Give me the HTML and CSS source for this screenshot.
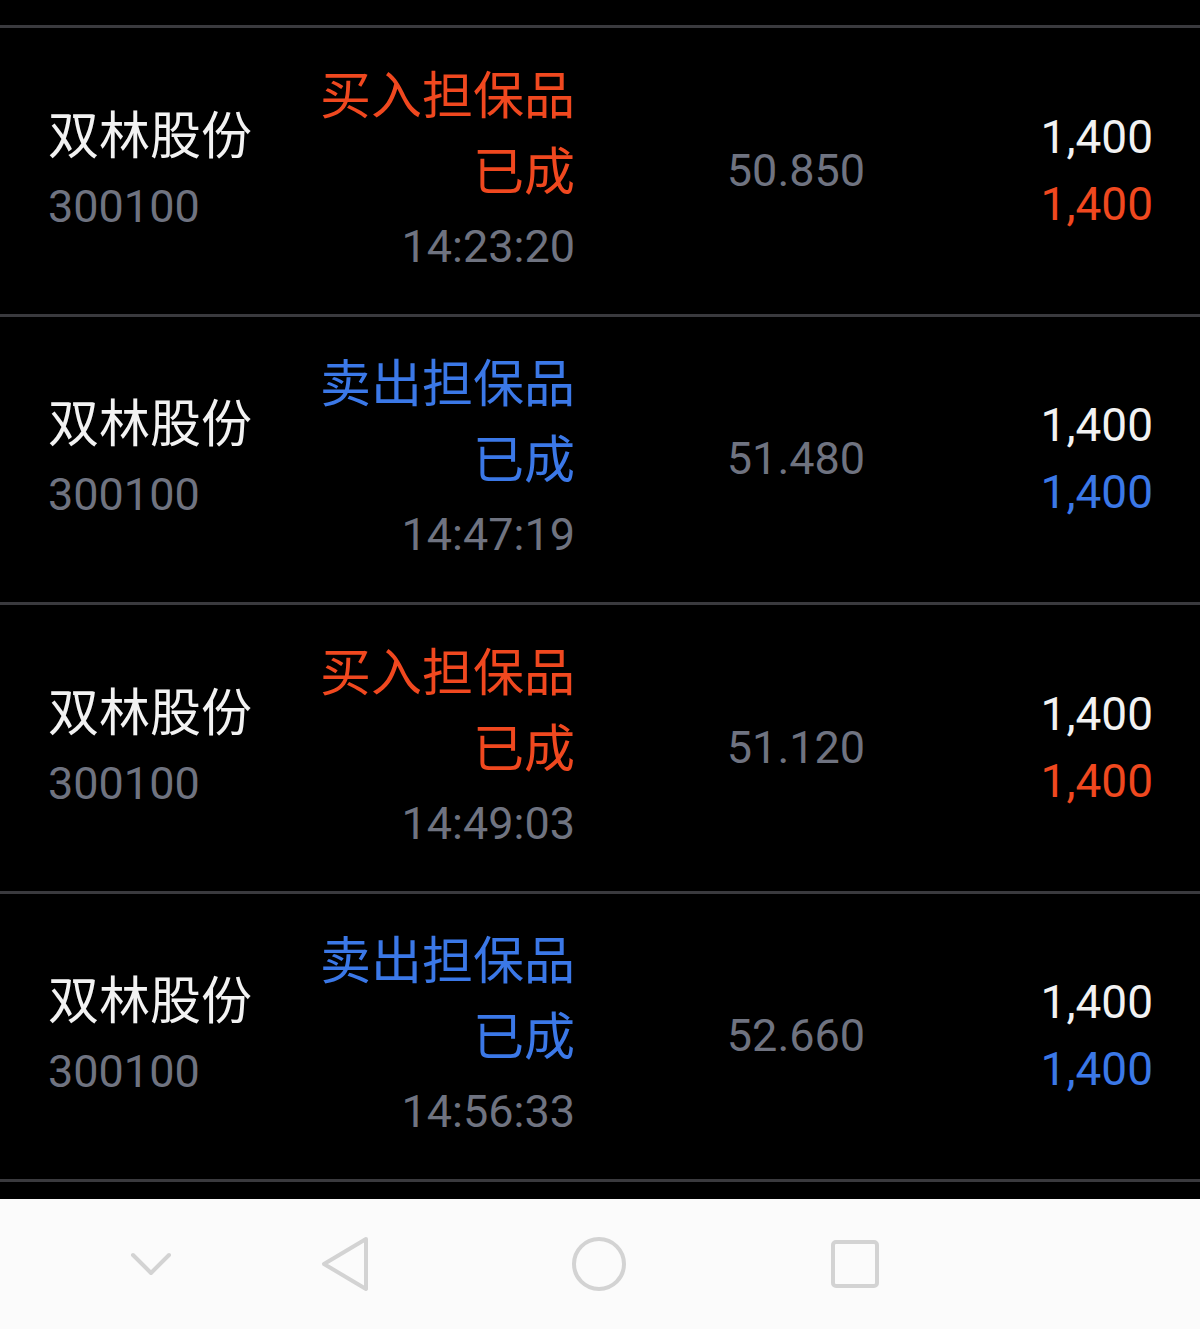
FILE: index.html
```html
<!DOCTYPE html>
<html lang="zh-CN">
<head>
<meta charset="utf-8">
<title>委托</title>
<link rel="stylesheet" href="styles.css">
</head>
<body>
<div class="screen">
  <div class="list">
    <div class="row">
      <div class="cell name-cell"><div class="name">双林股份</div><div class="code">300100</div></div>
      <div class="cell type-cell buy"><div class="type">买入担保品</div><div class="status">已成</div><div class="time">14:23:20</div></div>
      <div class="cell price-cell"><div class="price">50.850</div></div>
      <div class="cell qty-cell buy"><div class="qty">1,400</div><div class="done">1,400</div></div>
    </div>
    <div class="row">
      <div class="cell name-cell"><div class="name">双林股份</div><div class="code">300100</div></div>
      <div class="cell type-cell sell"><div class="type">卖出担保品</div><div class="status">已成</div><div class="time">14:47:19</div></div>
      <div class="cell price-cell"><div class="price">51.480</div></div>
      <div class="cell qty-cell sell"><div class="qty">1,400</div><div class="done">1,400</div></div>
    </div>
    <div class="row">
      <div class="cell name-cell"><div class="name">双林股份</div><div class="code">300100</div></div>
      <div class="cell type-cell buy"><div class="type">买入担保品</div><div class="status">已成</div><div class="time">14:49:03</div></div>
      <div class="cell price-cell"><div class="price">51.120</div></div>
      <div class="cell qty-cell buy"><div class="qty">1,400</div><div class="done">1,400</div></div>
    </div>
    <div class="row">
      <div class="cell name-cell"><div class="name">双林股份</div><div class="code">300100</div></div>
      <div class="cell type-cell sell"><div class="type">卖出担保品</div><div class="status">已成</div><div class="time">14:56:33</div></div>
      <div class="cell price-cell"><div class="price">52.660</div></div>
      <div class="cell qty-cell sell"><div class="qty">1,400</div><div class="done">1,400</div></div>
    </div>
  </div>
  <div class="peek"></div>
  <nav class="navbar">
    <svg class="nav-icon nav-hide" width="60" height="60" viewBox="0 0 60 60"><path d="M12 21 L30 39 L48 21" /></svg>
    <svg class="nav-icon nav-back" width="60" height="60" viewBox="0 0 60 60"><path d="M51 5 L9 30 L51 55 Z" /></svg>
    <svg class="nav-icon nav-home" width="60" height="60" viewBox="0 0 60 60"><circle cx="30" cy="30" r="25" /></svg>
    <svg class="nav-icon nav-recent" width="60" height="60" viewBox="0 0 60 60"><rect x="8" y="8" width="44" height="44" rx="3" /></svg>
  </nav>
</div>
</body>
</html>
```

FILE: styles.css
```css
* { box-sizing: border-box; }
html, body {
  margin: 0;
  padding: 0;
  background: #000;
}
body {
  font-family: Roboto, "Noto Sans CJK SC", sans-serif;
  width: 1200px;
  height: 1329px;
  overflow: hidden;
}
.screen {
  display: flex;
  flex-direction: column;
  height: 1329px;
}
.list {
  padding-top: 25px;
}
.row {
  height: 288.5px;
  border-top: 3px solid #3a3a3e;
  display: grid;
  grid-template-columns: 265px 262px 442px 136px;
  padding: 0 45px 0 48px;
  align-items: center;
  white-space: nowrap;
}
.cell {
  display: flex;
  flex-direction: column;
}
.name-cell { align-items: flex-start; }
.type-cell { align-items: flex-end; text-align: right; }
.price-cell { align-items: center; }
.qty-cell { align-items: flex-end; }

.name {
  font-family: "Noto Sans CJK SC", sans-serif;
  font-size: 51px;
  line-height: 72px;
  color: #f2f2f2;
}
.code {
  font-size: 45px;
  line-height: 72px;
  margin: 3px 0;
  color: #6f7380;
}
.type, .status {
  font-family: "Noto Sans CJK SC", sans-serif;
  font-size: 51px;
  line-height: 76px;
}
.time {
  font-size: 45px;
  line-height: 74px;
  margin: 4px 0;
  color: #6f7380;
}
.buy .type, .buy .status, .buy .done { color: #f0481f; }
.sell .type, .sell .status, .sell .done { color: #3b78e7; }
.price {
  font-size: 45px;
  line-height: 60px;
  color: #6f7380;
}
.qty, .done {
  font-size: 46px;
  line-height: 67px;
}
.qty { color: #f2f2f2; }

.peek {
  border-top: 3px solid #3a3a3e;
  flex: 1;
}
.navbar {
  height: 130px;
  background: #fbfbfb;
  display: flex;
  align-items: center;
  padding-left: 121px;
}
.nav-icon {
  fill: none;
  stroke: #d3d3d3;
  stroke-width: 4;
  stroke-linecap: round;
  stroke-linejoin: round;
  flex: none;
}
.nav-back { margin-left: 134px; }
.nav-home { margin-left: 194px; }
.nav-recent { margin-left: 196px; }
```
